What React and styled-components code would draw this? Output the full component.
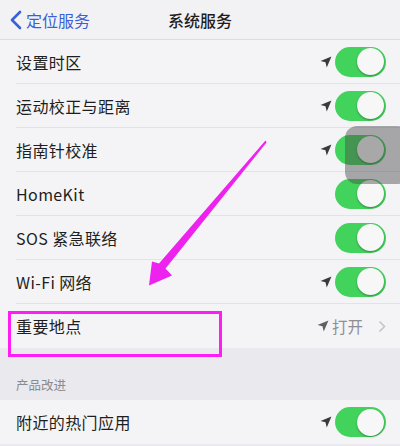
import React from 'react'
import styled, { createGlobalStyle } from 'styled-components'

const GlobalStyle = createGlobalStyle`
  html, body {
    margin: 0;
    padding: 0;
    background: #ebebf0;
  }
  body {
    font-family: "Noto Sans CJK SC", "Noto Sans", sans-serif;
  }
`

const Screen = styled.div`
  position: relative;
  width: 400px;
  height: 446px;
  overflow: hidden;
  background: #e9e9ee;
`

const NavBar = styled.div`
  height: 40px;
  display: grid;
  grid-template-columns: 1fr auto 1fr;
  align-items: center;
  background: #f2f2f5;
  border-bottom: 1px solid #dcdce0;
  box-sizing: border-box;
`

const Back = styled.div`
  display: flex;
  align-items: center;
  gap: 4px;
  padding-left: 10px;
  color: #3a5fd6;
  font-size: 16px;
`

const Title = styled.div`
  font-size: 16px;
  color: #1d1d1f;
  font-weight: 500;
`

const Group = styled.div`
  background: #f4f4f7;
`

const Row = styled.div`
  height: 44px;
  padding-left: 16px;
  display: flex;
`

const RowInner = styled.div`
  flex: 1;
  display: flex;
  align-items: center;
  justify-content: space-between;
  padding-right: 14px;
  border-bottom: ${p => (p.last ? 'none' : '1px solid #e2e2e7')};
`

const Label = styled.span`
  font-size: 16px;
  color: #1e1e20;
  letter-spacing: 0.4px;
`

const Accessory = styled.div`
  display: flex;
  align-items: center;
  gap: 3px;
`

const Detail = styled.span`
  font-size: 15.5px;
  color: #8e8e93;
  margin-right: 12px;
`

const Track = styled.div`
  width: 51px;
  height: 30px;
  border-radius: 15px;
  background: #42d35c;
  display: flex;
  align-items: center;
  justify-content: flex-end;
  padding: 0 2px;
  box-sizing: border-box;
`

const Knob = styled.div`
  width: 27px;
  height: 27px;
  border-radius: 50%;
  background: #f7f7f7;
  box-shadow: 0 1px 2px rgba(0, 0, 0, 0.35);
`

const SectionHeader = styled.div`
  height: 52px;
  display: flex;
  align-items: flex-end;
  padding: 0 16px 6px;
  box-sizing: border-box;
  font-size: 12.5px;
  color: #8a8a8f;
`

const Assistive = styled.div`
  position: absolute;
  left: 345px;
  top: 126px;
  width: 64px;
  height: 58px;
  border-radius: 12px;
  background: rgba(70, 70, 72, 0.45);
`

const Highlight = styled.div`
  position: absolute;
  left: 8px;
  top: 311px;
  width: 214px;
  height: 46px;
  box-sizing: border-box;
  border: 3px solid #ff1cf5;
`

const Overlay = styled.svg`
  position: absolute;
  left: 0;
  top: 0;
  pointer-events: none;
`

const LocationArrow = ({ color = '#3a3a3e' }) => (
  <svg width="12" height="12" viewBox="0 0 11 11">
    <path d="M10.5 0.5 L0.5 4.6 L5 5.8 L6.2 10.5 Z" fill={color} />
  </svg>
)

const Toggle = () => (
  <Track>
    <Knob />
  </Track>
)

const Chevron = () => (
  <svg width="8" height="13" viewBox="0 0 8 13">
    <path d="M1.5 1.5 L6.5 6.5 L1.5 11.5" stroke="#c4c4c8" strokeWidth="1.6" fill="none" />
  </svg>
)

const rows = [
  { label: '设置时区' },
  { label: '运动校正与距离' },
  { label: '指南针校准' },
  { label: 'HomeKit', noArrow: true },
  { label: 'SOS 紧急联络', noArrow: true },
  { label: 'Wi-Fi 网络' },
  { label: '重要地点', detail: '打开' },
]

const SettingRow = ({ label, detail, noArrow, last }) => (
  <Row>
    <RowInner last={last}>
      <Label>{label}</Label>
      {detail ? (
        <Accessory>
          <LocationArrow color="#5e5e63" />
          <Detail>{detail}</Detail>
          <Chevron />
        </Accessory>
      ) : (
        <Accessory>
          {!noArrow && <LocationArrow />}
          <Toggle />
        </Accessory>
      )}
    </RowInner>
  </Row>
)

const App = () => {
  return (
    <>
      <GlobalStyle />
      <Screen>
        <NavBar>
          <Back>
            <svg width="12" height="20" viewBox="0 0 12 20">
              <path d="M10 2 L2 10 L10 18" stroke="#3a5fd6" strokeWidth="2.6" fill="none" strokeLinecap="round" strokeLinejoin="round" />
            </svg>
            <span>定位服务</span>
          </Back>
          <Title>系统服务</Title>
          <div />
        </NavBar>

        <Group>
          {rows.map((r, i) => (
            <SettingRow key={r.label} {...r} last={i === rows.length - 1} />
          ))}
        </Group>

        <SectionHeader>产品改进</SectionHeader>

        <Group>
          <SettingRow label="附近的热门应用" last />
        </Group>

        <Assistive />
        <Highlight />
        <Overlay width="400" height="446" viewBox="0 0 400 446">
          <polygon
            points="265.5,140.5 266.5,142.5 165.5,268.5 172,275.5 149,285.5 152,261.5 159,263.5"
            fill="#ee22ee"
          />
        </Overlay>
      </Screen>
    </>
  )
}

export default App
